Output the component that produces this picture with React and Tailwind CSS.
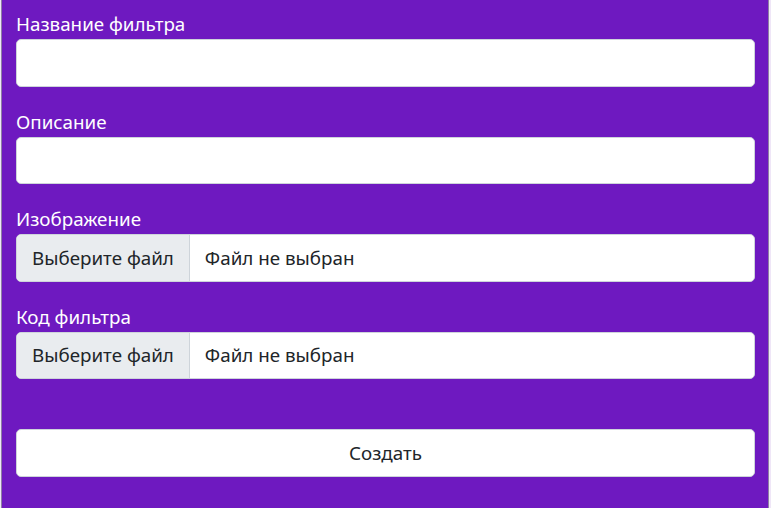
export default function App() {
  const font = { fontFamily: '"Noto Sans", "Open Sans", sans-serif' };
  return (
    <div className="w-[771px] h-[508px] overflow-hidden bg-[#efe6f7]" style={font}>
      <div className="ml-px w-[768px] h-full bg-[#6e19c0] border-x border-[#8f7fa3] pl-[14px] pr-[13px] pt-[9px]">
        <form className="flex flex-col text-[18.8px] leading-[30px] text-[#212529]">
          <label className="text-white">Название фильтра</label>
          <input
            type="text"
            className="h-[47.5px] w-full rounded-[5px] border border-[#ced4da] bg-white px-[15px] mb-[20px]"
          />

          <label className="text-white">Описание</label>
          <input
            type="text"
            className="h-[47.5px] w-full rounded-[5px] border border-[#ced4da] bg-white px-[15px] mb-[20px]"
          />

          <label className="text-white">Изображение</label>
          <div className="flex h-[47.5px] w-full rounded-[5px] border border-[#ced4da] bg-white overflow-hidden mb-[20px]">
            <span className="flex items-center px-[15px] bg-[#e9ecef] border-r border-[#ced4da]">
              Выберите файл
            </span>
            <span className="flex items-center px-[15px]">Файл не выбран</span>
          </div>

          <label className="text-white">Код фильтра</label>
          <div className="flex h-[47.5px] w-full rounded-[5px] border border-[#ced4da] bg-white overflow-hidden mb-[20px]">
            <span className="flex items-center px-[15px] bg-[#e9ecef] border-r border-[#ced4da]">
              Выберите файл
            </span>
            <span className="flex items-center px-[15px]">Файл не выбран</span>
          </div>

          <div className="h-[30px]" />
          <button
            type="button"
            className="h-[47.5px] w-full rounded-[5px] border border-[#ced4da] bg-white text-[#212529]"
          >
            Создать
          </button>
        </form>
      </div>
    </div>
  );
}
